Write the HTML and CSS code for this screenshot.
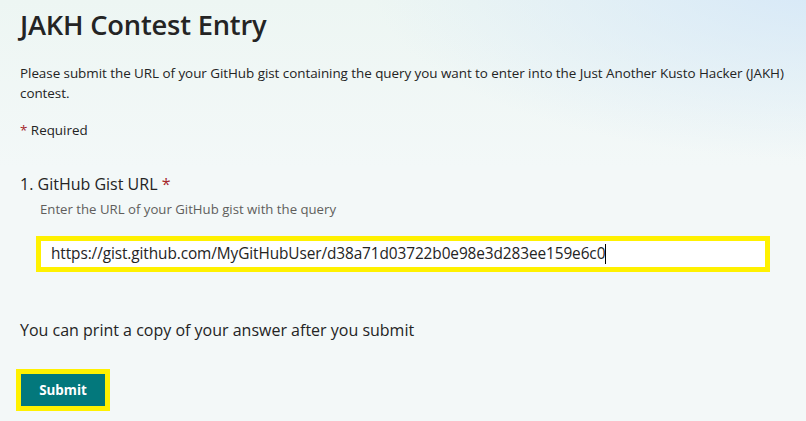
FILE: index.html
```html
<!DOCTYPE html>
<html lang="en">
<head>
<meta charset="utf-8">
<title>JAKH Contest Entry</title>
<link rel="stylesheet" href="styles.css">
</head>
<body>
<main class="form">
  <h1 class="title">JAKH Contest Entry</h1>
  <p class="desc">Please submit the URL of your GitHub gist containing the query you want to enter into the Just Another Kusto Hacker (JAKH) contest.</p>
  <p class="required"><span class="star">*</span> Required</p>
  <section class="question">
    <div class="q-title">1. GitHub Gist URL <span class="star">*</span></div>
    <div class="q-sub">Enter the URL of your GitHub gist with the query</div>
    <div class="input-wrap">
      <div class="input">https://gist.github.com/MyGitHubUser/d38a71d03722b0e98e3d283ee159e6c0<span class="caret"></span></div>
    </div>
  </section>
  <p class="print">You can print a copy of your answer after you submit</p>
  <div class="btn-wrap"><button class="btn">Submit</button></div>
</main>
</body>
</html>
```

FILE: styles.css
```css
* { box-sizing: border-box; }
html, body { margin: 0; height: 100%; }
body {
  font-family: "Open Sans", "Noto Sans", sans-serif;
  color: #242424;
  background:
    radial-gradient(ellipse 460px 180px at 830px -20px, #d6e8f8 0%, rgba(214,232,248,0) 100%),
    linear-gradient(180deg, #edf6f3 0%, #f3f8f8 40%, #f3f8f8 100%);
  overflow: hidden;
}
.form { padding: 6px 20px 0 20px; }
.title {
  margin: 0;
  font-size: 27.3px;
  font-weight: 600;
  line-height: 38px;
  letter-spacing: -0.2px;
}
.desc {
  margin: 19px 0 0 0;
  font-size: 13.45px;
  line-height: 20px;
  letter-spacing: -0.05px;
}
.required { margin: 17px 0 0 0; font-size: 13.4px; line-height: 20px; }
.star { color: #a4262c; }
.question { margin-top: 32px; }
.q-title { font-size: 16px; line-height: 24px; }
.q-sub { margin: 3px 0 0 20px; font-size: 13.2px; line-height: 20px; color: #605e5c; }
.input-wrap { margin: 17px 16px 0 16px; border: 5px solid #fff100; width: 734px; }
.input {
  background: #fff;
  height: 26px;
  padding: 0 0 0 10px;
  font-size: 15.4px;
  line-height: 26px;
  letter-spacing: -0.1px;
  white-space: nowrap;
}
.caret { display: inline-block; width: 1px; height: 20px; background: #000; vertical-align: -5px; }
.print { margin: 46px 0 0 0; font-size: 16px; line-height: 24px; }
.btn-wrap { margin: 27px 0 0 -4px; display: inline-block; border: 5px solid #fff100; }
.btn {
  display: block;
  width: 84px;
  height: 32px;
  border: none;
  background: #03787c;
  color: #fff;
  font-family: "Open Sans", sans-serif;
  font-size: 13.4px;
  font-weight: 700;
}
```
